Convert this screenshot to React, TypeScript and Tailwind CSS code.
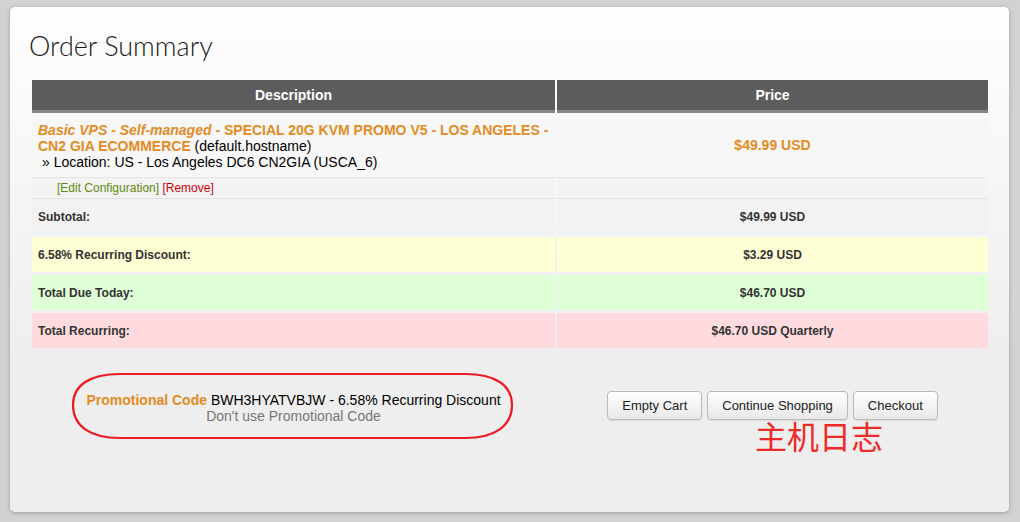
import React from "react";

const totals = [
  { label: "Subtotal:", value: "$49.99 USD", bg: "bg-[#f2f2f2]" },
  { label: "6.58% Recurring Discount:", value: "$3.29 USD", bg: "bg-[#ffffd6]" },
  { label: "Total Due Today:", value: "$46.70 USD", bg: "bg-[#dfffd6]" },
  { label: "Total Recurring:", value: "$46.70 USD Quarterly", bg: "bg-[#ffdbdf]" },
];

const Btn: React.FC<{ label: string }> = ({ label }) => (
  <button className="h-[29px] px-[14px] rounded-[4px] border border-[#b9b9b9] bg-linear-to-b from-white to-[#e8e8e8] text-[13px] text-[#222] shadow-[0_1px_1px_rgba(0,0,0,0.08)]">
    {label}
  </button>
);

export default function App() {
  return (
    <div className="w-[1020px] h-[522px] bg-[#d2d2d2] pt-[7px] pl-[10px] font-['Liberation_Sans',Arial,sans-serif]">
      <div className="relative w-[999px] h-[505px] rounded-[5px] bg-linear-to-b from-[#fefefe] to-[#eeeeee] to-70% shadow-[0_1px_4px_rgba(0,0,0,0.25)] pt-[22px] pl-[22px]">
        <h1 className="font-['Lato',sans-serif] font-light text-[27px] leading-[34px] text-[#1a1a1a] -ml-[3px]">
          Order Summary
        </h1>

        <div className="mt-[17px] grid grid-cols-[523px_431px] gap-x-[2px]">
          {/* header */}
          <div className="h-[33px] bg-[#5c5c5c] border-b-[3px] border-[#858585] flex items-center justify-center text-white font-bold text-[14px]">
            Description
          </div>
          <div className="h-[33px] bg-[#5c5c5c] border-b-[3px] border-[#858585] flex items-center justify-center text-white font-bold text-[14px]">
            Price
          </div>

          {/* item */}
          <div className="h-[65px] bg-[#f7f7f7] border-b border-[#e4e4e4] pt-[9px] px-[6px] text-[14px] leading-[16px] text-black">
            <span className="text-[#e38b24] font-bold">
              <i>Basic VPS - Self-managed</i> - SPECIAL 20G KVM PROMO V5 - LOS ANGELES - CN2 GIA ECOMMERCE
            </span>{" "}
            (default.hostname)
            <div className="pl-[4px]">» Location: US - Los Angeles DC6 CN2GIA (USCA_6)</div>
          </div>
          <div className="h-[65px] bg-[#f7f7f7] border-b border-[#e4e4e4] flex items-center justify-center text-[14px] font-bold text-[#e38b24]">
            $49.99 USD
          </div>

          {/* edit row */}
          <div className="h-[21px] bg-[#f3f3f3] border-b border-[#e4e4e4] pl-[25px] text-[12px] leading-[20px]">
            <span className="text-[#5f8a12]">[Edit Configuration]</span>{" "}
            <span className="text-[#cc0010]">[Remove]</span>
          </div>
          <div className="h-[21px] bg-[#f3f3f3] border-b border-[#e4e4e4]" />

          {/* totals */}
          {totals.map((t) => (
            <React.Fragment key={t.label}>
              <div className={`h-[35px] mb-[3px] ${t.bg} flex items-center pl-[6px] text-[12px] font-bold text-[#333]`}>
                {t.label}
              </div>
              <div className={`h-[35px] mb-[3px] ${t.bg} flex items-center justify-center text-[12px] font-bold text-[#333]`}>
                {t.value}
              </div>
            </React.Fragment>
          ))}

          {/* promo + buttons */}
          <div className="pt-[41px] flex flex-col items-center text-[14px] leading-[16px]">
            <div className="text-black">
              <span className="font-bold text-[#e38b24]">Promotional Code</span> BWH3HYATVBJW - 6.58% Recurring Discount
            </div>
            <div className="text-[#777]">Don't use Promotional Code</div>
          </div>
          <div className="pt-[40px] flex justify-center gap-[5px]">
            <Btn label="Empty Cart" />
            <Btn label="Continue Shopping" />
            <Btn label="Checkout" />
          </div>
        </div>

        {/* annotation overlays */}
        <svg className="absolute left-[60px] top-[364px]" width="447" height="70" viewBox="0 0 447 70">
          <path
            d="M50 3 L395 3 C425 3 442 14 442 34 C442 55 425 67 395 67 L50 67 C20 67 3 55 3 34 C3 14 20 3 50 3 Z"
            fill="none"
            stroke="#ea1c24"
            strokeWidth="2.2"
          />
        </svg>
        <div className="absolute left-[745px] top-[412px] text-[32px] leading-[32px] text-[#ee2a2a] font-['Noto_Sans_CJK_SC',sans-serif]">
          主机日志
        </div>
      </div>
    </div>
  );
}
